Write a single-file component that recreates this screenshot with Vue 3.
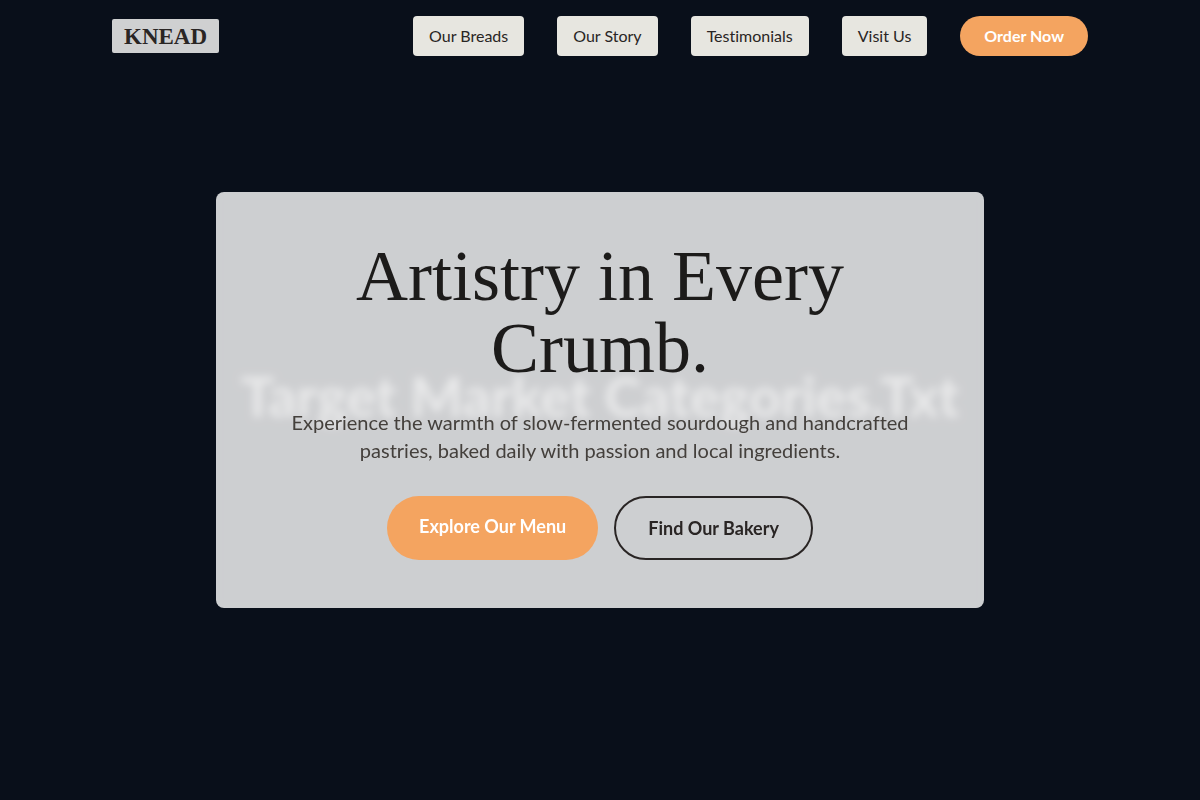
<script setup>
const links = [
  { label: 'Our Breads', href: '#breads' },
  { label: 'Our Story', href: '#story' },
  { label: 'Testimonials', href: '#testimonials' },
  { label: 'Visit Us', href: '#visit' },
]
</script>

<template>
  <div class="page">
    <header class="header">
      <div class="bar">
        <a class="brand" href="#home">KNEAD</a>
        <nav class="nav" aria-label="Main">
          <a v-for="link in links" :key="link.href" class="nav-link" :href="link.href">{{ link.label }}</a>
          <a class="order" href="#order">Order Now</a>
        </nav>
      </div>
    </header>

    <main id="home" class="hero">
      <div class="backdrop" aria-hidden="true">Target Market Categories.Txt</div>
      <section class="card">
        <h1>Artistry in Every Crumb.</h1>
        <p>
          Experience the warmth of slow-fermented sourdough and handcrafted pastries, baked daily with
          passion and local ingredients.
        </p>
        <div class="actions">
          <a class="button primary" href="#breads">Explore Our Menu</a>
          <a class="button outline" href="#visit">Find Our Bakery</a>
        </div>
      </section>
    </main>
  </div>
</template>

<style>
body {
  margin: 0;
  background: #090f1a;
}
</style>

<style scoped>
.page {
  position: relative;
  font-family: Lato, sans-serif;
  font-size: 16px;
  line-height: 24px;
  font-variant-ligatures: none;
  color: #292524;
}

a {
  color: inherit;
  text-decoration: none;
}

.header {
  position: absolute;
  top: 0;
  left: 0;
  right: 0;
  z-index: 2;
}

.bar {
  box-sizing: border-box;
  max-width: 1024px;
  margin: 0 auto;
  padding: 16px 24px;
  display: flex;
  align-items: center;
  justify-content: space-between;
}

.brand {
  padding: 6px 12px 4px;
  border-radius: 2px;
  background: #cfd0d1;
  font-family: "Liberation Serif", serif;
  font-size: 23px;
  line-height: 24px;
  font-weight: 700;
}

.nav {
  display: flex;
  align-items: center;
  gap: 33px;
}

.nav-link {
  padding: 8px 16px;
  border-radius: 4px;
  background: #e7e6e0;
}

.order {
  padding: 8px 24px;
  border-radius: 32px;
  background: #f4a460;
  color: #fff;
  font-weight: 700;
}

.hero {
  position: relative;
  box-sizing: border-box;
  min-height: 100vh;
  padding: 96px 24px;
  display: flex;
  align-items: center;
  justify-content: center;
}

.backdrop {
  position: absolute;
  inset: 0;
  padding-bottom: 8px;
  display: flex;
  align-items: center;
  justify-content: center;
  overflow: hidden;
  white-space: nowrap;
  font-size: 56px;
  line-height: 72px;
  font-weight: 700;
  color: #96989c;
}

.card {
  position: relative;
  box-sizing: border-box;
  width: 100%;
  max-width: 768px;
  padding: 48px;
  border-radius: 8px;
  background: rgba(255, 255, 255, 0.8);
  backdrop-filter: blur(4px);
  text-align: center;
}

h1 {
  margin: 0 0 24px;
  font-family: "Liberation Serif", serif;
  font-size: 72px;
  line-height: 72px;
  font-weight: 400;
  color: #1c1b1a;
}

p {
  max-width: 640px;
  margin: 0 auto 32px;
  font-size: 20px;
  line-height: 28px;
  color: #44403c;
}

.actions {
  display: flex;
  justify-content: center;
  gap: 16px;
}

.button {
  padding: 16px 32px;
  border-radius: 32px;
  font-size: 18px;
  line-height: 28px;
  font-weight: 700;
}

.primary {
  background: #f4a460;
  color: #fff;
}

.outline {
  border: 2px solid #292524;
}
</style>
